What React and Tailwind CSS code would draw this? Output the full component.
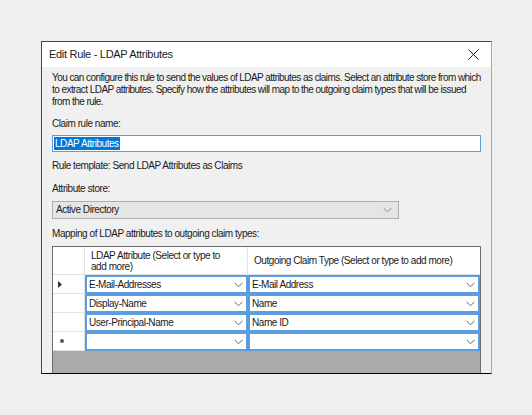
import React from "react";

// small chevron used by the combo boxes
const Chevron = ({ color = "#666" }) => (
  <svg width="9" height="6" viewBox="0 0 9 6" fill="none">
    <path d="M0.5 0.8 L4.5 4.8 L8.5 0.8" stroke={color} strokeWidth="1" />
  </svg>
);

const rows = [
  { marker: "arrow", attr: "E-Mail-Addresses", claim: "E-Mail Address" },
  { marker: "", attr: "Display-Name", claim: "Name" },
  { marker: "", attr: "User-Principal-Name", claim: "Name ID" },
  { marker: "star", attr: "", claim: "" },
];

const App = () => {
  return (
    <div
      className="w-[532px] h-[415px] bg-[#efefef] pt-[41px] pl-[41px] text-[#1a1a1a]"
      style={{ fontFamily: '"Liberation Sans", Arial, sans-serif' }}
    >
      <div className="w-[451px] h-[333px] flex flex-col bg-[#f0f0f0] border border-[#2c4b73] border-r-[#7fb2dd] border-b-black">
        {/* title bar */}
        <div className="h-[25px] bg-white flex items-center justify-between pl-[7px] pr-[12px]">
          <span className="text-[11px] tracking-[-0.3px]">Edit Rule - LDAP Attributes</span>
          <svg width="11" height="11" viewBox="0 0 11 11">
            <path d="M0.5 0.5 L10.5 10.5 M10.5 0.5 L0.5 10.5" stroke="#222" strokeWidth="1" />
          </svg>
        </div>

        <div className="flex-1 flex flex-col px-[10px] pt-[5px] text-[10px] tracking-[-0.45px] leading-[12px]">
          <p className="whitespace-nowrap tracking-[-0.56px]">
            You can configure this rule to send the values of LDAP attributes as claims. Select an attribute store from which
            <br />
            to extract LDAP attributes. Specify how the attributes will map to the outgoing claim types that will be issued
            <br />
            from the rule.
          </p>

          <div className="mt-[10px]">Claim rule name:</div>
          <div className="mt-[5px] h-[17px] bg-white border border-[#5a9ee0] flex items-center px-[1px]">
            <span className="bg-[#0078d7] text-white px-[1px] leading-[13px]">LDAP Attributes</span>
          </div>

          <div className="mt-[8px]">Rule template: Send LDAP Attributes as Claims</div>

          <div className="mt-[11px]">Attribute store:</div>
          <div className="mt-[6px] h-[18px] w-[347px] bg-[#e5e5e5] border border-[#adadad] flex items-center justify-between pl-[3px] pr-[6px]">
            <span>Active Directory</span>
            <Chevron color="#8a8a8a" />
          </div>

          <div className="mt-[9px]">Mapping of LDAP attributes to outgoing claim types:</div>

          {/* grid */}
          <div className="mt-[6px] flex-1 flex flex-col bg-[#ababab] border border-[#6d6d6d] border-b-0">
            <div className="h-[28px] flex bg-white border-b border-[#e2e2e2]">
              <div className="w-[32px] border-r border-[#e2e2e2]" />
              <div className="w-[163px] border-r border-[#e2e2e2] pl-[6px] pt-[3px] leading-[11px]">
                LDAP Attribute (Select or type to
                <br />
                add more)
              </div>
              <div className="flex-1 flex items-center pl-[6px]">
                Outgoing Claim Type (Select or type to add more)
              </div>
            </div>

            {rows.map((row, i) => (
              <div key={i} className="h-[19px] flex bg-white">
                <div className="w-[32px] border-r border-b border-[#e2e2e2] flex items-center pl-[5px]">
                  {row.marker === "arrow" && (
                    <svg width="4" height="7" viewBox="0 0 4 7">
                      <path d="M0 0 L4 3.5 L0 7 Z" fill="#333" />
                    </svg>
                  )}
                  {row.marker === "star" && (
                    <svg width="6" height="6" viewBox="0 0 6 6" className="ml-[1px]">
                      <circle cx="3" cy="3" r="2" fill="#555" />
                    </svg>
                  )}
                </div>
                <div className="w-[163px] border-2 border-[#5c9de0] flex items-center justify-between pl-[2px] pr-[3px]">
                  <span>{row.attr}</span>
                  <Chevron />
                </div>
                <div className="flex-1 border-2 border-[#5c9de0] flex items-center justify-between pl-[2px] pr-[3px]">
                  <span>{row.claim}</span>
                  <Chevron />
                </div>
              </div>
            ))}
          </div>
        </div>
      </div>
    </div>
  );
};

export default App;
